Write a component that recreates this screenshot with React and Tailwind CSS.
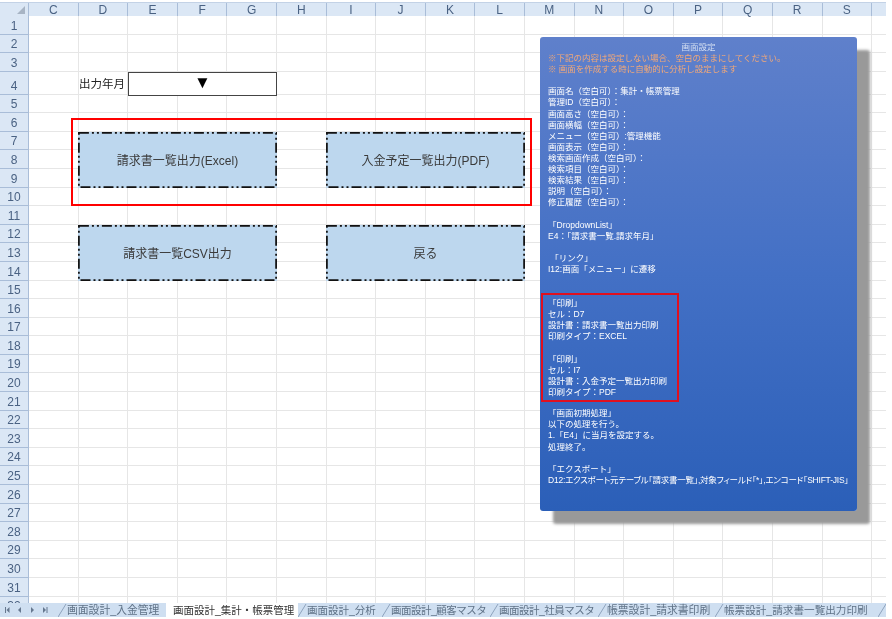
const COLUMNS = ["C", "D", "E", "F", "G", "H", "I", "J", "K", "L", "M", "N", "O", "P", "Q", "R", "S", ""]
const ROWS = Array.from({ length: 32 }, (_, i) => i + 1)

const NOTES_TOP = [
  "※下記の内容は設定しない場合、空白のままにしてください。",
  "※ 画面を作成する時に自動的に分析し設定します",
]

const NOTES_SETTINGS = [
  "",
  "画面名（空白可）：集計・帳票管理",
  "管理ID（空白可）：",
  "画面高さ（空白可）：",
  "画面横幅（空白可）：",
  "メニュー（空白可）:管理機能",
  "画面表示（空白可）：",
  "検索画面作成（空白可）：",
  "検索項目（空白可）：",
  "検索結果（空白可）：",
  "説明（空白可）：",
  "修正履歴（空白可）：",
  "",
  "「DropdownList」",
  "E4：「請求書一覧.請求年月」",
  "",
  " 「リンク」",
  "I12:画面「メニュー」に遷移",
  "",
  "",
]

const NOTES_PRINT = [
  "「印刷」",
  "セル：D7",
  "設計書：請求書一覧出力印刷",
  "印刷タイプ：EXCEL",
  "",
  "「印刷」",
  "セル：I7",
  "設計書：入金予定一覧出力印刷",
  "印刷タイプ：PDF",
]

const NOTES_END = [
  "",
  "「画面初期処理」",
  "以下の処理を行う。",
  "1.「E4」に当月を設定する。",
  "処理終了。",
  "",
  "「エクスポート」",
]

const TABS = [
  { label: "画面設計_入金管理", width: "w-[108px]", text: "text-[10.8px]" },
  { label: "画面設計_集計・帳票管理", width: "w-[132px]", text: "text-[10.5px]", active: true },
  { label: "画面設計_分析", width: "w-[84px]", text: "text-[10.5px]" },
  { label: "画面設計_顧客マスタ", width: "w-[108px]", text: "text-[10.5px] tracking-[-0.5px]" },
  { label: "画面設計_社員マスタ", width: "w-[108px]", text: "text-[10.5px] tracking-[-0.5px]" },
  { label: "帳票設計_請求書印刷", width: "w-[117px]", text: "text-[10.8px]" },
  { label: "帳票設計_請求書一覧出力印刷", width: "w-[163px]", text: "text-[10.6px]" },
  { label: "", width: "w-[8px]", text: "" },
]

// one dash-dot-dot shape with a label, like the Excel buttons
const SheetButton = ({ label }) => (
  <div className="relative w-[199px] h-[56px] shrink-0 bg-[#bdd7ee] flex items-center justify-center text-[12px] text-[#3a3a3a] pt-[2px]">
    <svg className="absolute inset-0" width="199" height="56">
      <rect
        x="0.9"
        y="0.9"
        width="197.2"
        height="54.2"
        fill="none"
        stroke="#111"
        strokeWidth="1.75"
        strokeDasharray="10 3 2 3 2 3"
      />
    </svg>
    <span className="relative">{label}</span>
  </div>
)

const NavArrows = () => (
  <svg width="58" height="14" className="shrink-0" fill="#66788f">
    <rect x="5" y="4" width="1" height="6" />
    <path d="M6.5 7l3-3v6z" />
    <path d="M18 7l3-3v6z" />
    <path d="M31 4l3 3-3 3z" />
    <path d="M43 4l3 3-3 3z" />
    <rect x="46.5" y="4" width="1" height="6" />
  </svg>
)

const Tab = ({ label, width, text, active }) => (
  <div
    className={`relative h-[14px] shrink-0 flex items-center overflow-hidden ${width} ${
      active ? "bg-white text-[#333] pl-[7px]" : "bg-[#cfdff1] text-[#5f7287] pl-[9px]"
    }`}
  >
    {!active && (
      <svg className="absolute left-0 top-0" width="9" height="14">
        <path d="M0 14L8 1" stroke="#8ea3bd" fill="none" />
      </svg>
    )}
    <span className={`whitespace-nowrap leading-[14px] ${text}`}>{label}</span>
  </div>
)

const NoteLines = ({ lines }) =>
  lines.map((line, i) => (
    <div key={i} className="h-[11.1px] whitespace-pre">
      {line}
    </div>
  ))

const App = () => {
  return (
    <div className="w-[892px] h-[619px] bg-white overflow-hidden font-['Liberation_Sans','Noto_Sans_CJK_JP',sans-serif] blur-[0.35px]">
      <div className="relative w-[886px] h-[601px] mt-[2px] overflow-hidden">
        {/* column header */}
        <div className="flex h-[14px] bg-[#dbe7f5] border-t border-[#c3d2e6]">
          <div className="w-[29px] shrink-0 relative border-r border-[#a9bdd8]">
            <svg className="absolute right-[3px] bottom-[2px]" width="8" height="8">
              <path d="M8 0v8H0z" fill="#a7b4c4" />
            </svg>
          </div>
          {COLUMNS.map((col, i) => (
            <div
              key={i}
              className="w-[49.6px] shrink-0 border-r border-[#a9bdd8] flex items-center justify-center text-[12px] text-[#4a6283]"
            >
              {col}
            </div>
          ))}
        </div>

        {/* cells */}
        {ROWS.map((row) => (
          <div key={row} className={`flex ${row === 4 ? "h-[22.8px]" : "h-[18.6px]"}`}>
            <div className="w-[29px] shrink-0 bg-[#dbe7f5] border-r border-b border-[#a9bdd8] flex items-end justify-center text-[12px] leading-[15px] text-[#4a6283]">
              {row}
            </div>
            {COLUMNS.map((col, i) => (
              <div key={i} className="w-[49.6px] shrink-0 border-r border-b border-[#e6e6e6]" />
            ))}
          </div>
        ))}

        {/* shapes floating on the sheet */}
        <div className="absolute left-[71px] top-[70px] flex flex-col">
          <div className="flex items-center h-[24px] pl-[8px]">
            <span className="w-[49px] text-[11.5px] text-[#222] pt-[1px]">出力年月</span>
            <div className="w-[149px] h-[24px] bg-white border border-[#444] flex items-center justify-center text-[17px] leading-none text-black pb-[4px]">
              ▼
            </div>
          </div>

          <div className="mt-[22px] w-[461px] h-[88px] border-2 border-[#f00] pt-[12px] pl-[5px] flex gap-[49px]">
            <SheetButton label="請求書一覧出力(Excel)" />
            <SheetButton label="入金予定一覧出力(PDF)" />
          </div>

          <div className="mt-[19px] pl-[7px] flex gap-[49px]">
            <SheetButton label="請求書一覧CSV出力" />
            <SheetButton label="戻る" />
          </div>
        </div>

        {/* notes panel */}
        <div className="absolute left-[540px] top-[35px] w-[317px] h-[474px] rounded-[3px] bg-gradient-to-b from-[#5f80cb] via-[#4370c5] to-[#2b5fb8] shadow-[13px_13px_3px_#999] px-[8px] pt-[5px] text-[8.5px] leading-[11.1px] text-white">
          <div className="text-center text-[#d5dff2]">画面設定</div>
          <div className="text-[#f2a878]">
            <NoteLines lines={NOTES_TOP} />
          </div>
          <NoteLines lines={NOTES_SETTINGS} />

          <div className="-mt-[4px] -ml-[7px] w-[138px] h-[109px] border-2 border-[#e0101f] pl-[5px] pt-[3px]">
            <NoteLines lines={NOTES_PRINT} />
          </div>

          <div className="-mt-[5px]">
            <NoteLines lines={NOTES_END} />
            <div className="h-[11.1px] whitespace-pre [font-feature-settings:'palt'] tracking-[-0.22px]">
              D12:エクスポート元テーブル「請求書一覧」,対象フィールド「*」,エンコード「SHIFT-JIS」
            </div>
          </div>
        </div>
      </div>

      {/* sheet tabs */}
      <div className="flex h-[14px] w-[886px] bg-[#cfdff1] overflow-hidden">
        <NavArrows />
        {TABS.map((tab, i) => (
          <Tab key={i} {...tab} />
        ))}
      </div>
    </div>
  )
}

export default App
